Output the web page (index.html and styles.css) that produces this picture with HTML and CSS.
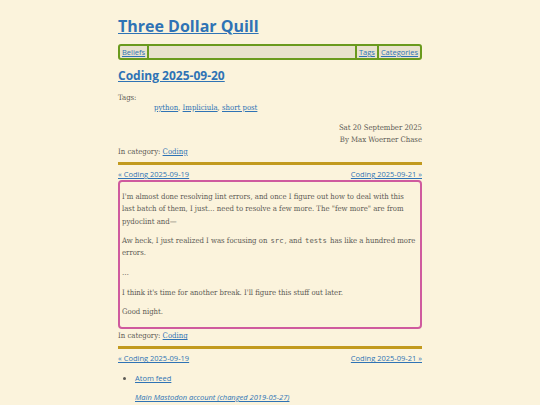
FILE: index.html
```html
<!DOCTYPE html>
<html lang="en">
<head>
<meta charset="utf-8">
<title>Coding 2025-09-20</title>
<link rel="stylesheet" href="styles.css">
</head>
<body>
<div class="page">
  <header class="site-header">
    <a class="site-title" href="#">Three Dollar Quill</a>
  </header>
  <nav class="site-nav">
    <a class="nav-item nav-left" href="#">Beliefs</a>
    <span class="nav-fill"></span>
    <a class="nav-item nav-right" href="#">Tags</a>
    <a class="nav-item nav-right" href="#">Categories</a>
  </nav>
  <article class="post">
    <h2 class="post-title"><a href="#">Coding 2025-09-20</a></h2>
    <div class="tags">
      <div class="tags-label">Tags:</div>
      <div class="tags-list"><a href="#">python</a>, <a href="#">Impliciula</a>, <a href="#">short post</a></div>
    </div>
    <div class="meta">
      <div>Sat 20 September 2025</div>
      <div>By Max Woerner Chase</div>
    </div>
    <div class="category">In category: <a href="#">Coding</a></div>
    <div class="rule"></div>
    <div class="pager"><a href="#">« Coding 2025-09-19</a><a href="#">Coding 2025-09-21 »</a></div>
    <div class="content">
      <p>I'm almost done resolving lint errors, and once I figure out how to deal with this last batch of them, I just… need to resolve a few more. The "few more" are from pydoclint and—</p>
      <p>Aw heck, I just realized I was focusing on <code>src</code>, and <code>tests</code> has like a hundred more errors.</p>
      <p class="ellipsis">…</p>
      <p>I think it's time for another break. I'll figure this stuff out later.</p>
      <p>Good night.</p>
    </div>
    <div class="category category-after">In category: <a href="#">Coding</a></div>
    <div class="rule"></div>
    <div class="pager"><a href="#">« Coding 2025-09-19</a><a href="#">Coding 2025-09-21 »</a></div>
  </article>
  <footer class="site-footer">
    <ul class="feeds">
      <li><a href="#">Atom feed</a></li>
    </ul>
    <p class="mastodon"><a href="#">Main Mastodon account (changed 2019-05-27)</a></p>
  </footer>
</div>
</body>
</html>
```
FILE: styles.css
```css
html, body {
  margin: 0;
  padding: 0;
  background: #fbf3dc;
}
body {
  font-family: "DejaVu Serif", serif;
  font-size: 7.7px;
  line-height: 12px;
  color: #5c5a55;
}
a {
  color: #2f73b5;
}
.page {
  width: 304px;
  margin: 0 auto;
  padding-top: 14px;
}
.post {
  font-family: "DejaVu Serif Condensed", "DejaVu Serif", serif;
  font-stretch: condensed;
}
.site-header {
  height: 30px;
}
.site-title {
  font-family: "Open Sans", sans-serif;
  font-stretch: normal;
  font-weight: 700;
  font-size: 16px;
  line-height: 24px;
}
.site-nav {
  display: flex;
  align-items: stretch;
  height: 12px;
  border: 2px solid #6a9a1e;
  border-radius: 3px;
  background: #e9e2cd;
  font-family: "Open Sans", sans-serif;
  font-stretch: normal;
  font-size: 7.5px;
  line-height: 12px;
}
.nav-item {
  padding: 0 2px;
}
.nav-left {
  border-right: 2px solid #6a9a1e;
}
.nav-right {
  border-left: 2px solid #6a9a1e;
}
.nav-fill {
  flex: 1;
}
.post-title {
  margin: 7px 0 0;
  font-family: "Open Sans", sans-serif;
  font-stretch: normal;
  font-weight: 700;
  font-size: 12px;
  line-height: 18px;
}
.tags {
  margin-top: 8px;
  line-height: 10px;
}
.tags-list {
  padding-left: 36px;
}
.meta {
  margin-top: 9px;
  text-align: right;
}
.rule {
  height: 3px;
  background: #c29a1e;
  margin: 3.5px 0 3.5px;
}
.pager {
  display: flex;
  justify-content: space-between;
  font-family: "Open Sans", sans-serif;
  font-stretch: normal;
  font-size: 7.5px;
  line-height: 12px;
}
.content {
  border: 2px solid #cf5a9e;
  border-radius: 4px;
  padding: 2px 3px 2px 2px;
}
.content p {
  margin: 6.5px 0;
  line-height: 12.5px;
}
.content p.ellipsis {
  margin: 7.7px 0;
}
code {
  font-family: "DejaVu Sans Mono", monospace;
  font-stretch: normal;
  font-size: 7.2px;
  line-height: 1;
  margin: 0 1px;
}
.category-after {
  margin-top: 1px;
}
.site-footer {
  font-family: "Open Sans", sans-serif;
  font-stretch: normal;
}
.feeds {
  margin: 7.5px 0 0;
  padding-left: 17px;
  font-size: 7.5px;
  line-height: 12px;
}
.mastodon {
  margin: 7px 0 0 17px;
  font-style: italic;
  font-size: 7.5px;
  line-height: 12px;
}
```
